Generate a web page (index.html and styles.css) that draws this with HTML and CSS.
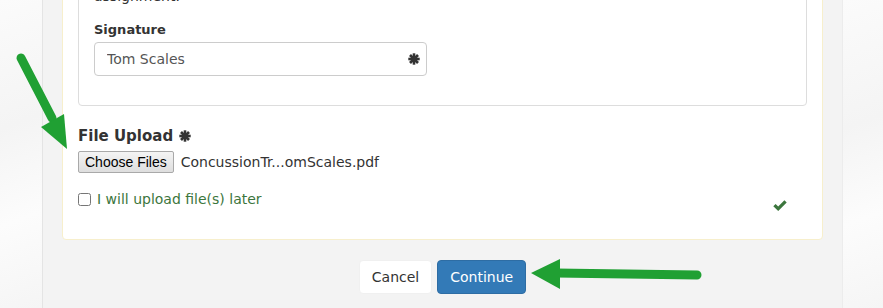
FILE: index.html
```html
<!DOCTYPE html>
<html lang="en">
<head>
<meta charset="utf-8">
<title>File Upload</title>
<link rel="stylesheet" href="styles.css">
</head>
<body>
<div class="page">
  <div class="side side-left"></div>
  <main class="panel">
    <section class="card">
      <div class="well">
        <p class="note">By typing your name below you confirm that you have reviewed and completed this<br>assignment.</p>
        <div class="group">
          <label class="label">Signature</label>
          <div class="field">
            <input class="field-input" type="text" value="Tom Scales">
            <svg class="star" viewBox="0 0 12 12" width="12" height="12" aria-hidden="true"><g stroke="#333" stroke-width="2.6" stroke-linecap="butt"><line x1="6" y1="0.3" x2="6" y2="11.7"/><line x1="0.3" y1="6" x2="11.7" y2="6"/><line x1="2" y1="2" x2="10" y2="10"/><line x1="10" y1="2" x2="2" y2="10"/></g></svg>
          </div>
        </div>
      </div>
      <div class="upload">
        <div class="upload-label">File Upload
          <svg class="star star-label" viewBox="0 0 12 12" width="12" height="12" aria-hidden="true"><g stroke="#333" stroke-width="2.6"><line x1="6" y1="0.3" x2="6" y2="11.7"/><line x1="0.3" y1="6" x2="11.7" y2="6"/><line x1="2" y1="2" x2="10" y2="10"/><line x1="10" y1="2" x2="2" y2="10"/></g></svg>
        </div>
        <div class="file-row">
          <span class="file-btn">Choose Files</span>
          <span class="file-name">ConcussionTr...omScales.pdf</span>
        </div>
        <div class="later-row">
          <label class="later"><input type="checkbox" class="check-input"> I will upload file(s) later</label>
          <svg class="ok" viewBox="0 0 14 11" width="14" height="11" aria-hidden="true"><path d="M0.3 6.2 L2.6 3.9 L5.2 6.5 L11.4 0.3 L13.7 2.6 L5.2 11 Z" fill="#3c763d"/></svg>
        </div>
      </div>
    </section>
    <div class="actions">
      <button class="btn btn-cancel" type="button">Cancel</button>
      <button class="btn btn-continue" type="button">Continue</button>
    </div>
  </main>
  <div class="side side-right"></div>
  <svg class="arrows" viewBox="0 0 883 308" width="883" height="308" aria-hidden="true">
    <line x1="21" y1="58" x2="52" y2="118" stroke="#20a033" stroke-width="9" stroke-linecap="round"/>
    <polygon points="41,127 64,114 67,149" fill="#20a033"/>
    <line x1="697" y1="275" x2="556" y2="273" stroke="#20a033" stroke-width="9" stroke-linecap="round"/>
    <polygon points="531,273 560,259 560,289" fill="#20a033"/>
  </svg>
</div>
</body>
</html>
```

FILE: styles.css
```css
* { box-sizing: border-box; }

html, body {
  margin: 0;
  padding: 0;
  height: 308px;
  overflow: hidden;
}

body {
  font-family: "DejaVu Sans", Verdana, sans-serif;
  font-size: 14px;
  color: #333;
  background: #f9f9f9;
}

.page {
  position: relative;
  display: flex;
  width: 883px;
  height: 308px;
}

.side {
  background: linear-gradient(160deg, #fbfbfb 0%, #f4f4f4 40%, #fcfcfc 70%, #f5f5f5 100%);
}

.side-left { width: 42px; }
.side-right { flex: 1; border-left: 1px solid #ececec; }

.panel {
  width: 800px;
  background: #f3f3f3;
  border-left: 1px solid #e4e4e4;
  padding: 0 19px 0 19px;
}

.card {
  margin-top: -66px;
  background: #fff;
  border: 1px solid #f7efcc;
  border-radius: 0 0 4px 4px;
  padding: 15px 15px 28px 15px;
}

.well {
  border: 1px solid #dddddd;
  border-radius: 4px;
  padding: 15px 15px 15px 15px;
}

.note {
  margin: 0 0 15px 0;
  line-height: 20px;
}

.group { margin-bottom: 14px; }

.label {
  display: block;
  font-weight: bold;
  font-size: 13px;
  line-height: 18px;
  margin-bottom: 3px;
}

.field {
  display: flex;
  align-items: center;
  width: 333px;
  height: 34px;
  border: 1px solid #cccccc;
  border-radius: 4px;
  padding: 0 6px 0 12px;
}

.field-input {
  flex: 1;
  border: 0;
  padding: 0;
  margin: 0;
  font: inherit;
  font-size: 14px;
  color: #555;
  background: transparent;
  outline: none;
  min-width: 0;
}

.star { display: block; flex: none; }

.upload { padding-top: 20px; }

.upload-label {
  display: flex;
  align-items: center;
  gap: 6px;
  font-weight: bold;
  font-size: 15px;
  line-height: 20px;
  margin-bottom: 5px;
}

.file-row {
  display: flex;
  align-items: center;
  gap: 7px;
}

.file-btn {
  display: inline-flex;
  align-items: center;
  height: 22px;
  padding: 0 6px;
  font-family: "Liberation Sans", Arial, sans-serif;
  font-size: 14px;
  color: #000;
  background: linear-gradient(#f4f4f4, #dedede);
  border: 1px solid #a9a9a9;
  border-radius: 2px;
}

.file-name {
  font-size: 14px;
  color: #333;
}

.later-row {
  display: flex;
  justify-content: space-between;
  align-items: flex-start;
  margin-top: 16px;
  padding-right: 20px;
}

.later {
  display: flex;
  align-items: center;
  gap: 6px;
  color: #3c763d;
  font-size: 14px;
  line-height: 20px;
}

.check-input {
  width: 13px;
  height: 13px;
  margin: 0;
}

.ok { display: block; margin-top: 11px; }

.actions {
  display: flex;
  justify-content: center;
  gap: 5px;
  margin-top: 20px;
}

.btn {
  font-family: "DejaVu Sans", Verdana, sans-serif;
  font-size: 14px;
  line-height: 20px;
  padding: 6px 12px;
  border-radius: 4px;
  cursor: pointer;
}

.btn-cancel {
  background: #fff;
  color: #333;
  border: 1px solid #f0f0f0;
}

.btn-continue {
  background: #337ab7;
  color: #fff;
  border: 1px solid #2e6da4;
}

.arrows {
  position: absolute;
  left: 0;
  top: 0;
  pointer-events: none;
}
```
